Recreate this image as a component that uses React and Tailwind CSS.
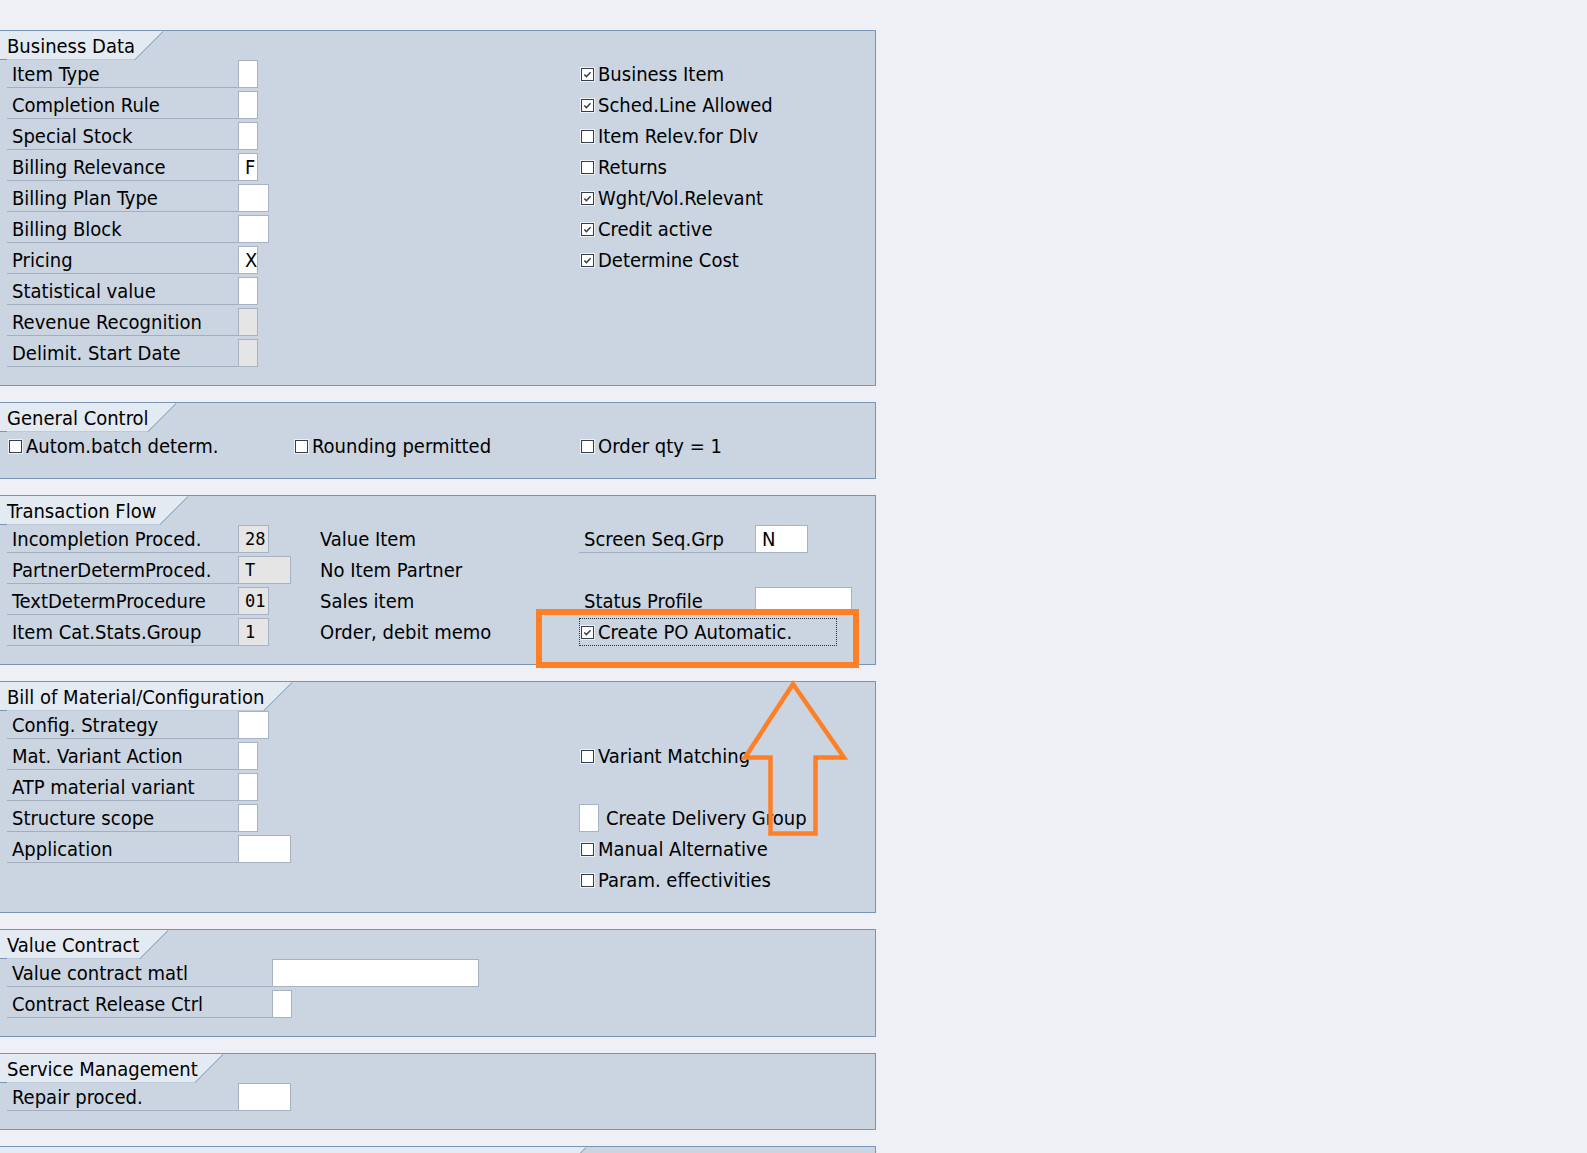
import React from "react";

const LINE = "#7895b6";

// Slanted SAP-style group tab
function Tab({ title, w, cls }) {
  return (
    <div className={`relative h-[29px] ${cls}`}>
      <svg className="absolute left-0 top-0" width={w} height={29}>
        <polygon points={`0,0 ${w},0 ${w - 29},29 0,29`} fill="#e4eaf1" />
        <line x1={0} y1={28.5} x2={w - 29} y2={28.5} stroke="#bccada" strokeWidth="1" />
        <line x1={0} y1={28.5} x2={7} y2={28.5} stroke={LINE} strokeWidth="1" />
        <line x1={w + 0.5} y1={0} x2={w - 28.5} y2={29} stroke={LINE} strokeWidth="1" />
      </svg>
      {title && (
        <span className="relative block whitespace-nowrap pl-[7px] leading-[31px]">{title}</span>
      )}
    </div>
  );
}

function Box({ cls, value, gray, mono }) {
  return (
    <div
      className={`h-[28px] shrink-0 border border-[#a7b3c2] pl-[6px] leading-[26px] ${cls} ${
        gray ? "bg-[#e5e5e5]" : "bg-white"
      } ${mono ? "font-['DejaVu_Sans_Mono',monospace] text-[17px] font-stretch-normal" : ""}`}
    >
      {value}
    </div>
  );
}

// Label with underline followed by an entry box
function Field({ label, labelCls = "w-[231px]", boxCls = "w-[20px]", value, gray, mono }) {
  return (
    <div className="flex h-[28px]">
      <div className={`${labelCls} shrink-0 whitespace-nowrap border-b border-[#a3afbf] pl-[5px] leading-[28px]`}>
        {label}
      </div>
      <Box cls={boxCls} value={value} gray={gray} mono={mono} />
    </div>
  );
}

function Check({ on }) {
  return (
    <span className="flex h-[13px] w-[13px] shrink-0 items-center justify-center border border-[#353e4a] bg-white shadow-[0_0_0_1px_#eef1f5]">
      {on && (
        <svg width="11" height="11" viewBox="0 0 11 11">
          <path d="M2.3 5.4 L4.4 7.6 L8.6 3.2" fill="none" stroke="#3c424b" strokeWidth="1.5" />
        </svg>
      )}
    </span>
  );
}

function CheckItem({ label, on }) {
  return (
    <div className="flex h-[28px] items-center gap-[4px] pl-[2px] whitespace-nowrap">
      <Check on={on} />
      <span className="leading-[28px]">{label}</span>
    </div>
  );
}

function Row({ left, mid, right }) {
  return (
    <div className="flex h-[28px]">
      <div className="w-[309px] shrink-0">{left}</div>
      <div className="w-[263px] shrink-0">{mid}</div>
      <div className="flex-1">{right}</div>
    </div>
  );
}

function Panel({ tab, children }) {
  return (
    <section className="w-[876px] border border-l-0 border-[#7895b6] bg-[#cad5e1]">
      {tab}
      <div className="flex flex-col gap-[3px] pb-[18px] pl-[7px]">{children}</div>
    </section>
  );
}

function MidText({ children }) {
  return <div className="pl-[4px] leading-[28px] whitespace-nowrap">{children}</div>;
}

export default function App() {
  return (
    <div className="relative h-[1153px] w-[1587px] overflow-hidden bg-[#eff0f5] pt-[30px] text-[20px] text-black font-['DejaVu_Sans_Condensed','DejaVu_Sans',sans-serif] font-stretch-condensed">
      <div className="flex flex-col gap-[16px]">
        <Panel tab={<Tab title="Business Data" w={163} cls="w-[163px]" />}>
          <Row left={<Field label="Item Type" />} right={<CheckItem label="Business Item" on />} />
          <Row left={<Field label="Completion Rule" />} right={<CheckItem label="Sched.Line Allowed" on />} />
          <Row left={<Field label="Special Stock" />} right={<CheckItem label="Item Relev.for Dlv" />} />
          <Row left={<Field label="Billing Relevance" value="F" />} right={<CheckItem label="Returns" />} />
          <Row left={<Field label="Billing Plan Type" boxCls="w-[31px]" />} right={<CheckItem label="Wght/Vol.Relevant" on />} />
          <Row left={<Field label="Billing Block" boxCls="w-[31px]" />} right={<CheckItem label="Credit active" on />} />
          <Row left={<Field label="Pricing" value="X" />} right={<CheckItem label="Determine Cost" on />} />
          <Row left={<Field label="Statistical value" />} />
          <Row left={<Field label="Revenue Recognition" gray />} />
          <Row left={<Field label="Delimit. Start Date" gray />} />
        </Panel>

        <Panel tab={<Tab title="General Control" w={176} cls="w-[176px]" />}>
          <div className="flex h-[28px]">
            <div className="w-[286px] shrink-0">
              <CheckItem label="Autom.batch determ." />
            </div>
            <div className="w-[286px] shrink-0">
              <CheckItem label="Rounding permitted" />
            </div>
            <div className="flex-1">
              <CheckItem label="Order qty = 1" />
            </div>
          </div>
        </Panel>

        <Panel tab={<Tab title="Transaction Flow" w={188} cls="w-[188px]" />}>
          <Row
            left={<Field label="Incompletion Proced." boxCls="w-[31px]" value="28" gray mono />}
            mid={<MidText>Value Item</MidText>}
            right={<Field label="Screen Seq.Grp" labelCls="w-[176px]" boxCls="w-[53px]" value="N" />}
          />
          <Row
            left={<Field label="PartnerDetermProced." boxCls="w-[53px]" value="T" gray mono />}
            mid={<MidText>No Item Partner</MidText>}
          />
          <Row
            left={<Field label="TextDetermProcedure" boxCls="w-[31px]" value="01" gray mono />}
            mid={<MidText>Sales item</MidText>}
            right={<Field label="Status Profile" labelCls="w-[176px]" boxCls="w-[97px]" />}
          />
          <Row
            left={<Field label="Item Cat.Stats.Group" boxCls="w-[31px]" value="1" gray mono />}
            mid={<MidText>Order, debit memo</MidText>}
            right={
              <div className="flex h-[28px] w-[258px] items-center gap-[4px] border border-dotted border-[#2d333b] pl-[1px] whitespace-nowrap">
                <Check on />
                <span className="leading-[26px]">Create PO Automatic.</span>
              </div>
            }
          />
        </Panel>

        <Panel tab={<Tab title="Bill of Material/Configuration" w={292} cls="w-[292px]" />}>
          <Row left={<Field label="Config. Strategy" boxCls="w-[31px]" />} />
          <Row left={<Field label="Mat. Variant Action" />} right={<CheckItem label="Variant Matching" />} />
          <Row left={<Field label="ATP material variant" />} />
          <Row
            left={<Field label="Structure scope" />}
            right={
              <div className="flex h-[28px] items-center gap-[7px] whitespace-nowrap">
                <Box cls="w-[20px]" />
                <span className="leading-[28px]">Create Delivery Group</span>
              </div>
            }
          />
          <Row left={<Field label="Application" boxCls="w-[53px]" />} right={<CheckItem label="Manual Alternative" />} />
          <Row right={<CheckItem label="Param. effectivities" />} />
        </Panel>

        <Panel tab={<Tab title="Value Contract" w={168} cls="w-[168px]" />}>
          <Field label="Value contract matl" labelCls="w-[265px]" boxCls="w-[207px]" />
          <Field label="Contract Release Ctrl" labelCls="w-[265px]" boxCls="w-[20px]" />
        </Panel>

        <Panel tab={<Tab title="Service Management" w={223} cls="w-[223px]" />}>
          <Field label="Repair proced." boxCls="w-[53px]" />
        </Panel>

        <section className="h-[120px] w-[876px] border border-l-0 border-[#7895b6] bg-[#cad5e1]">
          <Tab w={586} cls="w-[586px]" />
        </section>
      </div>

      {/* highlight frame around the PO checkbox */}
      <div className="pointer-events-none absolute left-[536px] top-[609px] h-[59px] w-[323px] border-[6px] border-[#ff7f27]" />

      {/* outlined arrow pointing at the frame */}
      <svg className="pointer-events-none absolute left-0 top-0" width="1587" height="1153">
        <polygon
          points="793,684 844,757.5 815.5,757.5 815.5,833.5 770.5,833.5 770.5,757.5 745,757.5"
          fill="none"
          stroke="#ff7f27"
          strokeWidth="4.5"
          strokeLinejoin="miter"
        />
      </svg>
    </div>
  );
}
